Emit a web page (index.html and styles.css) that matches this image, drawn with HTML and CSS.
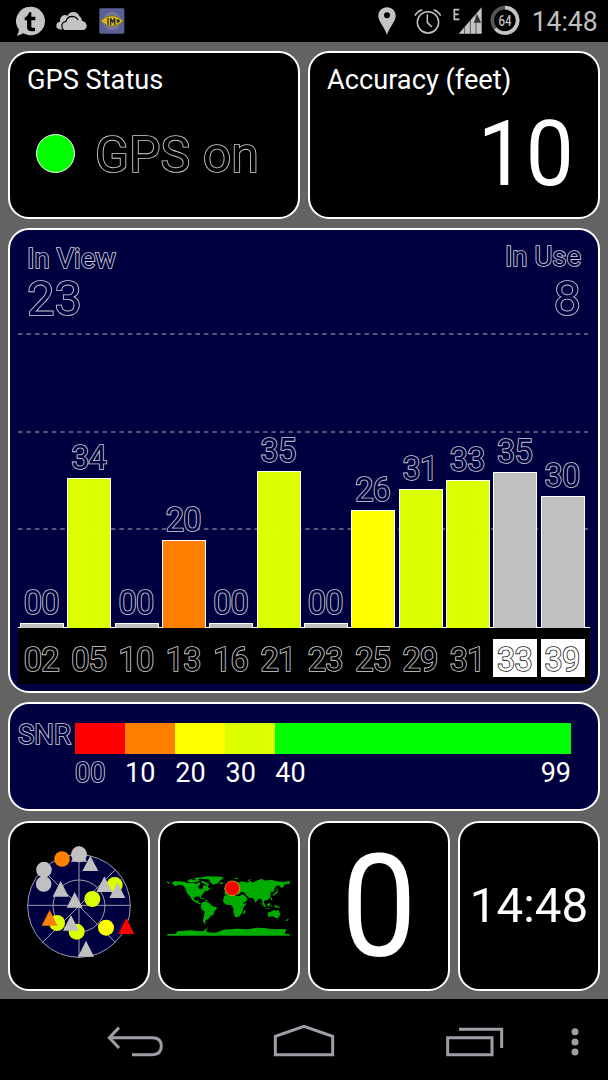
FILE: index.html
```html
<!DOCTYPE html>
<html lang="en">
<head>
<meta charset="utf-8">
<title>GPS Status</title>
<link rel="stylesheet" href="styles.css">
</head>
<body>
<div class="screen">
  <header class="statusbar">
    <svg class="ic-chat" width="30" height="42" viewBox="48 0 90 126"><path d="M91 20A43 43 0 1 1 70 100Q62 106 50 107Q56 99 57 89A43 43 0 0 1 91 20Z" fill="#c4c4c4"/><path d="M94 37V50H106V61H94V80Q95 85 105 83V93Q81 97 81 82V61H74V53Q83 50 87 37Z" fill="#000"/></svg>
    <svg class="ic-cloud" width="31" height="42" viewBox="167 0 93 126"><path d="M179 88Q168 87 168 77Q168 67 179 65Q178 48 193 45Q199 45 202 47Q207 36 219 36Q232 36 237 48Q244 52 245 63Q258 65 259 78Q258 90 247 90H194Z" fill="#c4c4c4"/><path d="M191 91Q183 85 185 73Q188 65 197 64Q201 49 216 49Q229 50 233 60" fill="none" stroke="#000" stroke-width="3.5"/></svg>
    <svg class="ic-im" width="26" height="42" viewBox="296 0 78 126"><rect x="297" y="25" width="75" height="76" rx="4" fill="#5b6196"/><circle cx="335" cy="63" r="27" fill="#777993"/><path d="M300 63Q335 31 370 63Q335 95 300 63Z" fill="#d5b81e" stroke="#5b5526" stroke-width="2"/><path d="M323 54V74M331 75V55L337 66L343 55V75M348 63H359M353 57V70" fill="none" stroke="#292b2d" stroke-width="4"/></svg>
    <span class="spacer"></span>
    <svg class="ic-pin" width="18" height="42" viewBox="223 0 54 126"><path fill-rule="evenodd" d="M250 22C265 22 276 33 276 48C276 63 259 80 250 104C241 80 224 63 224 48C224 33 235 22 250 22ZM250 37A9 9 0 1 0 250 55A9 9 0 1 0 250 37Z" fill="#c4c4c4"/></svg>
    <svg class="ic-alarm" width="28" height="42" viewBox="331 0 84 126"><g fill="none" stroke="#c4c4c4" stroke-width="4.5"><circle cx="373" cy="67" r="32"/><path d="M371 43V67L384 81M334 47Q340 34 356 29M390 29Q405 34 411 47"/></g></svg>
    <svg class="ic-signal" width="30" height="42" viewBox="448 0 90 126"><path d="M467 29H452V58H467M452 43H465" fill="none" stroke="#c4c4c4" stroke-width="5"/><path d="M465 101L534 22V101Z" fill="#c4c4c4"/><path d="M483 76V102M500 57V102M517 38V102" stroke="#222" stroke-width="2"/><path d="M521 43L532 68H510Z" fill="#333"/></svg>
    <div class="battery">
      <svg width="30" height="42" viewBox="560 0 90 126"><g fill="none" stroke-width="11"><circle cx="605" cy="61" r="38" stroke="#555"/><path d="M605 23A38 38 0 1 1 576 86" stroke="#c4c4c4"/></g></svg>
      <span class="battery-text">64</span>
    </div>
    <span class="clock">14:48</span>
  </header>

  <main class="board">
    <div class="row row-top">
      <section class="card status">
        <h2 class="title">GPS Status</h2>
        <div class="gps"><i class="led"></i><span class="outline">GPS on</span></div>
      </section>
      <section class="card accuracy">
        <h2 class="title">Accuracy (feet)</h2>
        <div class="acc-value">10</div>
      </section>
    </div>

    <section class="card navy chart">
      <div class="plot">
        <svg class="grid" width="572" height="398" viewBox="0 0 572 398"><path d="M0 104H570M0 202H570M0 299H570" stroke="#737390" stroke-width="1.6" stroke-dasharray="4.5 3.95"/></svg>
        <div class="counts outline">
          <div class="count"><span class="count-label">In View</span><span class="count-num">23</span></div>
          <div class="count use"><span class="count-label">In Use</span><span class="count-num">8</span></div>
        </div>
        <div class="bars">
          <div class="col"><span class="outline">00</span><i class="bar gray" style="height:5px"></i></div>
          <div class="col"><span class="outline">34</span><i class="bar lime" style="height:150px"></i></div>
          <div class="col"><span class="outline">00</span><i class="bar gray" style="height:5px"></i></div>
          <div class="col"><span class="outline">20</span><i class="bar orange" style="height:88px"></i></div>
          <div class="col"><span class="outline">00</span><i class="bar gray" style="height:5px"></i></div>
          <div class="col"><span class="outline">35</span><i class="bar lime" style="height:157px"></i></div>
          <div class="col"><span class="outline">00</span><i class="bar gray" style="height:5px"></i></div>
          <div class="col"><span class="outline">26</span><i class="bar yellow" style="height:118.5px"></i></div>
          <div class="col"><span class="outline">31</span><i class="bar lime" style="height:139.5px"></i></div>
          <div class="col"><span class="outline">33</span><i class="bar lime" style="height:148px"></i></div>
          <div class="col"><span class="outline">35</span><i class="bar gray" style="height:156px"></i></div>
          <div class="col"><span class="outline">30</span><i class="bar gray" style="height:132px"></i></div>
        </div>
      </div>
      <div class="axis outline">
        <span class="sat">02</span><span class="sat">05</span><span class="sat">10</span><span class="sat">13</span><span class="sat">16</span><span class="sat">21</span><span class="sat">23</span><span class="sat">25</span><span class="sat">29</span><span class="sat">31</span><span class="sat on">33</span><span class="sat on">39</span>
      </div>
    </section>

    <section class="card navy snr">
      <div class="snr-name outline">SNR</div>
      <div class="scale">
        <div class="seg red"></div><div class="seg orange"></div><div class="seg yellow"></div><div class="seg lime"></div><div class="seg green"></div>
        <span class="tick outline">00</span><span class="tick">10</span><span class="tick">20</span><span class="tick">30</span><span class="tick last"><span>40</span><span>99</span></span>
      </div>
    </section>

    <div class="row row-bottom">
      <section class="card">
        <svg width="138" height="166" viewBox="30 24 414 498">
          <circle cx="237" cy="273" r="154" fill="#000040" stroke="#9c9cac" stroke-width="3"/>
          <g fill="none" stroke="#9c9cac" stroke-width="3"><circle cx="237" cy="273" r="78"/><path d="M83 271H391M237 119V427M128 164L346 382M346 164L128 382"/></g>
          <g fill="#c0c0c0"><circle cx="132" cy="164" r="23.5"/><circle cx="131" cy="207" r="23.5"/><path d="M237 92L261 140H213Z"/><circle cx="237" cy="118" r="24"/><path d="M271 122L295 168H247ZM182 198L206 245H158ZM224 231L248 278H200Z"/></g>
          <circle cx="186" cy="132" r="23.5" fill="#ff8000"/>
          <circle cx="344" cy="210" r="24" fill="#dcff00"/><circle cx="277" cy="252" r="24" fill="#dcff00"/><circle cx="171" cy="324" r="24" fill="#dcff00"/><circle cx="230" cy="350" r="24" fill="#dcff00"/>
          <circle cx="318" cy="338" r="24" fill="#ff0"/>
          <path d="M313 184L337 231H289ZM352 202L376 249H328ZM213 300L237 347H189ZM258 377L282 425H234Z" fill="#c0c0c0"/>
          <path d="M149 285L173 332H125Z" fill="#ff8000"/><path d="M379 309L403 357H355Z" fill="#f00"/>
        </svg>
      </section>
      <section class="card">
        <svg width="138" height="166" viewBox="15 24 414 498">
          <g fill="#00ac00">
            <path d="M52 202L60 198L88 200L96 204L114 203L126 207L128 201L136 205L134 211L128 215L134 222L142 223L145 210L151 212L158 210L159 217L166 221L158 227L149 229L143 238L138 243V253L132 244L119 246L117 253L123 258L132 254L129 262L138 265L134 268L119 261L111 255L104 243L96 235L92 222L85 212L74 209L60 213L55 216L59 210L52 208Z"/>
            <path d="M95 199L106 192L117 196L128 191L134 197L120 202L103 202ZM113 193L128 187L142 189L130 193ZM139 197L149 200L162 207L160 213L150 208L139 202ZM135 188L155 184L199 185L206 188L195 197L188 205L174 209L166 201L161 193L137 192Z"/>
            <path d="M135 247L149 251V254L138 250ZM150 254L158 255L156 258L150 257Z"/>
            <path d="M140 263L151 259L164 265L170 272L184 277L186 281L178 288L176 299L168 302L160 312L153 314L150 323L155 326H148L143 317L147 302L149 290L142 285L137 277Z"/>
            <path d="M192 204L202 202L207 205L198 208ZM207 219L217 216L216 225H209Z"/>
            <path d="M210 229L223 223L230 207L241 199L253 203L259 199L278 203L286 197L292 203L310 195L321 191L329 197L348 194L364 199L382 200L405 201L397 207L386 209L388 213L378 220L375 212L365 212L357 222L358 228L347 232L346 246L338 255L326 258L329 267L333 275L328 273L323 265L319 253L312 250L302 263L295 250L282 248L275 241L267 232L258 231L250 239L241 235L234 236L224 233L216 239L208 238Z"/>
            <path d="M207 243L219 238L232 239L243 242L256 243L260 248L266 266L276 265L264 279L262 292L255 302L246 307L240 306L235 292L236 281L230 270L214 269L204 260Z"/>
            <path d="M258 237L270 242L278 252L272 260L263 264L255 247ZM268 286L272 286L269 297L264 297Z"/>
            <path d="M319 263L331 274L330 277L319 267ZM337 267L346 263L345 273L337 275ZM348 266L352 275H349ZM357 270L369 273L376 280L360 277ZM332 278L345 281L343 283L331 280ZM345 245L350 248L353 259L347 252ZM352 240L365 229L371 232L362 237L355 243ZM365 216L370 227L366 228Z"/>
            <path d="M338 293L350 289L356 285L364 287L370 285L376 297L371 308L361 309L353 303L339 306ZM397 312L402 310L398 317L390 319ZM365 311H370L367 315Z"/>
            <path d="M37 357H404V362H37ZM61 358L67 349L105 346L144 349L159 337L153 349L160 352L182 353L205 344L244 341L280 343L305 338L330 339L347 343L378 342L394 343L389 358Z"/><path d="M36 199L44 202L43 206L36 203ZM389 200L404 198V207H396ZM233 190L252 189L246 193ZM278 195L291 192L280 199Z"/>
          </g>
          <circle cx="232" cy="220" r="22" fill="#f00" stroke="#e8bd21" stroke-width="2"/>
        </svg>
      </section>
      <section class="card speed"><span>0</span></section>
      <section class="card time"><span>14:48</span></section>
    </div>
  </main>

  <nav class="navbar">
    <svg width="608" height="81" viewBox="0 57 1824 243"><g fill="none" stroke="#9e9ea7" stroke-width="9"><path d="M330 173H457Q484 173 484 198Q484 224 457 224H396"/><path d="M357 143L328 173L357 204"/><path d="M826 224V169L912 139L998 169V224Z"/><path d="M1343 173H1476V224H1343Z"/><path d="M1377 148H1505V204"/></g><g fill="#9e9ea7"><circle cx="1725" cy="155" r="10.5"/><circle cx="1725" cy="186" r="10.5"/><circle cx="1725" cy="216" r="10.5"/></g></svg>
  </nav>
</div>
</body>
</html>
```
FILE: styles.css
```css
* { box-sizing: border-box; }
body { margin: 0; background: #000; font-family: Roboto, "Liberation Sans", sans-serif; color: #fff; }
svg { display: block; flex: none; }
.screen { width: 608px; height: 1080px; display: flex; flex-direction: column; overflow: hidden; }
/* The fill hides the inner half of the stroke, leaving a clean contour. */
.outline { color: #000; -webkit-text-stroke: 1.7px #d0d0d6; paint-order: stroke fill; }
.navy .outline { color: #000040; }
.navy .axis { color: #000; }

.statusbar { height: 42px; display: flex; align-items: center; padding: 0 10px 0 16px; color: #bebebe; }
.ic-chat { margin-right: 10px; }
.ic-cloud { margin-right: 12px; }
.spacer { flex: 1; }
.ic-pin { margin-right: 18px; }
.ic-alarm { margin-right: 11px; }
.ic-signal { margin-right: 7px; }
.battery { display: grid; place-items: center; margin-right: 11px; }
.battery > * { grid-area: 1 / 1; }
.battery-text { font-size: 14px; line-height: 14px; font-weight: 500; transform: scaleX(.82); }
.clock { width: 67px; font-size: 27px; line-height: 44px; padding-top: 2px; white-space: nowrap; transform: scaleX(.98); }

.board { height: 957px; background: #636363; padding: 9px 8px 0; display: flex; flex-direction: column; gap: 9px; }
.row { display: flex; gap: 8px; }
.row > .card { flex: 1 1 0; min-width: 0; }
.card { border: 2px solid #fff; border-radius: 21px; background: #000; overflow: hidden; }
.navy { background: #000040; }
.row-top { height: 168px; }
.row-bottom { height: 170px; margin-top: 1px; }

.title { margin: 0; padding: 14px 0 0 17px; font-size: 27.2px; line-height: 27px; font-weight: 400; white-space: nowrap; }
.gps { display: flex; align-items: center; gap: 20px; margin: 36px 0 0 26px; font-size: 50px; line-height: 50px; }
.led { width: 39px; height: 39px; border-radius: 50%; border: 1.5px solid #fff; background: #0f0; margin-bottom: 3px; }
.acc-value { padding: 16px 24px 0 0; text-align: right; font-size: 90px; line-height: 90px; transform: scaleX(.95); transform-origin: 262px 0; }

.chart { height: 465px; padding: 0 8px; }
.plot { display: grid; height: 398px; border-bottom: 1px solid #fff; }
.plot > * { grid-area: 1 / 1; }
.counts { display: flex; justify-content: space-between; padding: 16px 9px 0 9px; }
.count { display: flex; flex-direction: column; }
.count-label { font-size: 27.5px; line-height: 25px; }
.count-num { font-size: 49px; line-height: 45px; margin-top: 5px; }
.use { text-align: right; margin-top: -2px; }
.use .count-num { margin-top: 7px; }
.bars { display: flex; align-items: flex-end; gap: 3.33px; padding-left: 2px; }
.col { width: 44px; display: flex; flex-direction: column; align-items: center; gap: 4px; font-size: 32.5px; line-height: 32px; letter-spacing: -.8px; }
.col .outline { margin-right: 1.4px; }
.bar { width: 44px; border: 1px solid #fff; border-bottom: 0; }
.gray { background: #c0c0c0; }
.lime { background: #dcff00; }
.orange { background: #ff8000; }
.yellow { background: #ff0; }
.red { background: #f00; }
.green { background: #0f0; }
.axis { display: flex; gap: 3.33px; height: 56px; padding: 11px 0 0 2px; background: #000; letter-spacing: -.8px; }
.sat { width: 44px; height: 38px; padding: 2px 1.4px 0 0; text-align: center; font-size: 32.5px; line-height: 38px; }
.on { color: #fff; background: #fff; -webkit-text-stroke-color: #222; }

.snr { height: 109px; display: flex; padding: 19px 27px 0 8px; }
.snr-name { width: 57px; font-size: 27.5px; line-height: 28px; margin-top: -2px; }
.scale { flex: 1; display: grid; grid-template-columns: 50px 50.3px 50.2px 49.8px 1fr; grid-template-rows: 31px 27px; row-gap: 6px; align-content: start; }
.tick { font-size: 27px; line-height: 27px; }
.last { display: flex; justify-content: space-between; }

.speed { display: flex; align-items: center; justify-content: center; font-size: 142px; line-height: 174px; }
.speed span { transform: translateY(2px) scaleX(.95); }
.time { display: flex; align-items: center; justify-content: center; font-size: 49px; line-height: 168px; white-space: nowrap; }
.time span { transform: scaleX(.97); }
.navbar { height: 81px; background: #000; }
```
